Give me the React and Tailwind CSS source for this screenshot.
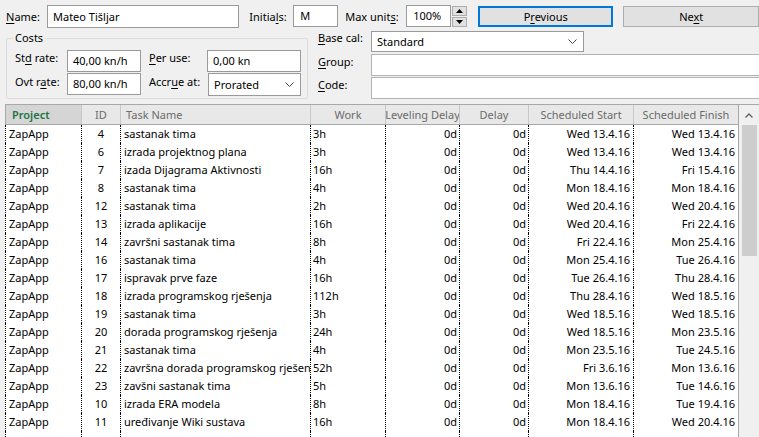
import React from 'react';

const rows = [
  ['4', 'sastanak tima', '3h', 'Wed 13.4.16', 'Wed 13.4.16'],
  ['6', 'izrada projektnog plana', '3h', 'Wed 13.4.16', 'Wed 13.4.16'],
  ['7', 'izada Dijagrama Aktivnosti', '16h', 'Thu 14.4.16', 'Fri 15.4.16'],
  ['8', 'sastanak tima', '4h', 'Mon 18.4.16', 'Mon 18.4.16'],
  ['12', 'sastanak tima', '2h', 'Wed 20.4.16', 'Wed 20.4.16'],
  ['13', 'izrada aplikacije', '16h', 'Wed 20.4.16', 'Fri 22.4.16'],
  ['14', 'završni sastanak tima', '8h', 'Fri 22.4.16', 'Mon 25.4.16'],
  ['16', 'sastanak tima', '4h', 'Mon 25.4.16', 'Tue 26.4.16'],
  ['17', 'ispravak prve faze', '16h', 'Tue 26.4.16', 'Thu 28.4.16'],
  ['18', 'izrada programskog rješenja', '112h', 'Thu 28.4.16', 'Wed 18.5.16'],
  ['19', 'sastanak tima', '3h', 'Wed 18.5.16', 'Wed 18.5.16'],
  ['20', 'dorada programskog rješenja', '24h', 'Wed 18.5.16', 'Mon 23.5.16'],
  ['21', 'sastanak tima', '4h', 'Mon 23.5.16', 'Tue 24.5.16'],
  ['22', 'završna dorada programskog rješenja', '52h', 'Fri 3.6.16', 'Mon 13.6.16'],
  ['23', 'zavšni sastanak tima', '5h', 'Mon 13.6.16', 'Tue 14.6.16'],
  ['10', 'izrada ERA modela', '8h', 'Mon 18.4.16', 'Tue 19.4.16'],
  ['11', 'uređivanje Wiki sustava', '16h', 'Mon 18.4.16', 'Wed 20.4.16'],
  null,
];

const Chevron = () => (
  <svg width="9" height="5" viewBox="0 0 9 5" className="shrink-0">
    <polyline points="0.5,0.5 4.5,4.5 8.5,0.5" fill="none" stroke="#444" strokeWidth="1" />
  </svg>
);

const Label = ({ children, className = '' }) => (
  <span className={`shrink-0 leading-[14px] whitespace-nowrap ${className}`}>{children}</span>
);

const U = ({ children }) => <u className="underline underline-offset-[2px]">{children}</u>;

const cell = 'shrink-0 overflow-hidden whitespace-nowrap border-r border-dotted border-black';

export default function App() {
  return (
    <div className="w-[759px] h-[437px] overflow-hidden bg-[#f0f0f0] text-black font-['Noto_Sans',sans-serif] text-[11px] leading-[14px]">
      {/* top row */}
      <div className="flex items-start pt-[5px] pl-[6px] h-[28px]">
        <Label className="w-[41px] mt-[5px]"><U>N</U>ame:</Label>
        <div className="w-[193px] h-[23px] border border-[#9a9a9a] bg-white pl-[5px] leading-[21px]">Mateo Tišljar</div>
        <Label className="ml-[10px] w-[44px] mt-[5px]">Initia<U>l</U>s:</Label>
        <div className="w-[45px] h-[22px] border border-[#9a9a9a] bg-white pl-[6px] leading-[20px]">M</div>
        <Label className="ml-[7px] w-[61px] mt-[5px]">Max unit<U>s</U>:</Label>
        <div className="w-[45px] h-[22px] border border-[#9a9a9a] bg-white pl-[6px] leading-[20px]">100%</div>
        <div className="ml-[1px] mt-[1px] w-[15px] flex flex-col gap-[1px]">
          <div className="h-[10px] border border-[#adadad] bg-[#e1e1e1] flex items-center justify-center">
            <svg width="7" height="4" viewBox="0 0 7 4"><polygon points="0,4 3.5,0 7,4" fill="#000" /></svg>
          </div>
          <div className="h-[10px] border border-[#adadad] bg-[#e1e1e1] flex items-center justify-center">
            <svg width="7" height="4" viewBox="0 0 7 4"><polygon points="0,0 3.5,4 7,0" fill="#000" /></svg>
          </div>
        </div>
        <button className="ml-[11px] mt-[1px] w-[136px] h-[21px] border-2 border-[#0078d7] bg-[#e1e1e1] leading-[17px] text-center">P<U>r</U>evious</button>
        <button className="ml-[10px] mt-[1px] w-[136px] h-[21px] border border-[#adadad] bg-[#e1e1e1] leading-[19px] text-center">Ne<U>x</U>t</button>
      </div>

      {/* costs + calendar */}
      <div className="flex items-start mt-[3px] h-[68px]">
        <fieldset className="ml-[6px] w-[302px] h-[68px] border border-[#dcdcdc] rounded-[2px]">
          <legend className="ml-[6px] px-[2px] leading-[14px]">Costs</legend>
          <div className="flex items-start mt-[5px] pl-[8px] h-[22px]">
            <Label className="w-[52px] mt-[1px]">St<U>d</U> rate:</Label>
            <div className="w-[74px] h-[22px] border border-[#9a9a9a] bg-white pl-[5px] leading-[20px]">40,00 kn/h</div>
            <Label className="ml-[8px] w-[58px] mt-[1px]"><U>P</U>er use:</Label>
            <div className="w-[94px] h-[22px] border border-[#9a9a9a] bg-white pl-[5px] leading-[20px]">0,00 kn</div>
          </div>
          <div className="flex items-start mt-[1px] pl-[8px] h-[22px]">
            <Label className="w-[52px] mt-[2px]">Ovt r<U>a</U>te:</Label>
            <div className="w-[74px] h-[22px] border border-[#9a9a9a] bg-white pl-[5px] leading-[20px]">80,00 kn/h</div>
            <Label className="ml-[8px] w-[59px] mt-[2px]">Accr<U>u</U>e at:</Label>
            <div className="w-[93px] h-[23px] border border-[#9a9a9a] bg-white pl-[5px] pr-[6px] flex items-center justify-between">
              <span>Prorated</span>
              <Chevron />
            </div>
          </div>
        </fieldset>

        <div className="flex-1 pl-[10px] flex flex-col">
          <div className="flex items-start h-[21px]">
            <Label className="w-[53px]"><U>B</U>ase cal:</Label>
            <div className="w-[213px] h-[21px] border border-[#9a9a9a] bg-white pl-[5px] pr-[6px] flex items-center justify-between">
              <span>Standard</span>
              <Chevron />
            </div>
          </div>
          <div className="flex items-start h-[22px] mt-[2px]">
            <Label className="w-[53px] mt-[1px]"><U>G</U>roup:</Label>
            <div className="flex-1 h-[22px] border border-r-0 border-[#b4b4b4] bg-white" />
          </div>
          <div className="flex items-start h-[22px] mt-[1px]">
            <Label className="w-[53px] mt-[1px]"><U>C</U>ode:</Label>
            <div className="flex-1 h-[22px] border border-r-0 border-[#b4b4b4] bg-white" />
          </div>
        </div>
      </div>

      {/* table */}
      <div className="flex ml-[5px] mt-[5px] border-t border-[#a8a8a8] h-[340px]">
        <div className="w-[734px] shrink-0 bg-white flex flex-col overflow-hidden">
          <div className="flex shrink-0 h-[20px] border-l border-b border-[#a8a8a8] bg-[#e8e8e8] text-[#6b6b6b]">
            <div className="w-[76px] shrink-0 bg-[#d5d5d5] border-r border-[#c8c8c8] pl-[6px] flex items-center text-[#217346] font-semibold">Project</div>
            <div className="w-[39px] shrink-0 border-r border-[#c8c8c8] flex items-center justify-center">ID</div>
            <div className="w-[190px] shrink-0 border-r border-[#c8c8c8] pl-[5px] flex items-center">Task Name</div>
            <div className="w-[75px] shrink-0 border-r border-[#c8c8c8] flex items-center justify-center">Work</div>
            <div className="w-[74px] shrink-0 border-r border-[#c8c8c8] flex items-center justify-center overflow-hidden whitespace-nowrap">
              <span className="shrink-0">Leveling Delay</span>
            </div>
            <div className="w-[69px] shrink-0 border-r border-[#c8c8c8] flex items-center justify-center">Delay</div>
            <div className="w-[105px] shrink-0 border-r border-[#c8c8c8] flex items-center justify-center">Scheduled Start</div>
            <div className="w-[105px] shrink-0 border-r border-[#a8a8a8] flex items-center justify-center">Scheduled Finish</div>
          </div>
          {rows.map((r, i) => (
            <div key={i} className="flex h-[18px] shrink-0 leading-[18px] border-l border-dotted border-black">
              <div className={`${cell} w-[76px] pl-[3px]`}>{r ? 'ZapApp' : ''}</div>
              <div className={`${cell} w-[39px] text-center`}>{r ? r[0] : ''}</div>
              <div className={`${cell} w-[190px] pl-[3px]`}>{r ? r[1] : ''}</div>
              <div className={`${cell} w-[75px] pl-[2px]`}>{r ? r[2] : ''}</div>
              <div className={`${cell} w-[74px] text-right pr-[2px]`}>{r ? '0d' : ''}</div>
              <div className={`${cell} w-[69px] text-right pr-[2px]`}>{r ? '0d' : ''}</div>
              <div className={`${cell} w-[105px] text-right pr-[3px]`}>{r ? r[3] : ''}</div>
              <div className="shrink-0 overflow-hidden whitespace-nowrap w-[105px] text-right pr-[3px] border-r border-[#a8a8a8]">{r ? r[4] : ''}</div>
            </div>
          ))}
        </div>
        <div className="w-[20px] shrink-0 bg-[#f0f0f0] flex flex-col">
          <div className="h-[20px] shrink-0 flex items-center justify-center">
            <svg width="8" height="5" viewBox="0 0 8 5">
              <polyline points="0.5,4.5 4,1 7.5,4.5" fill="none" stroke="#606060" strokeWidth="1.3" />
            </svg>
          </div>
          <div className="ml-[3px] w-[15px] h-[131px] shrink-0 bg-[#cdcdcd]" />
        </div>
      </div>
    </div>
  );
}
